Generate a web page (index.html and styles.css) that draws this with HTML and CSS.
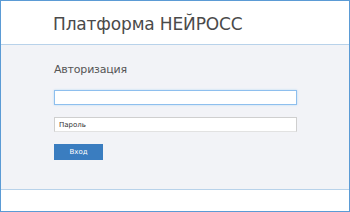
FILE: index.html
```html
<!DOCTYPE html>
<html lang="ru">
<head>
    <meta charset="UTF-8">
    <title>Платформа НЕЙРОСС</title>
    <link rel="stylesheet" href="styles.css">
</head>
<body>

<div class="frame">
    <div class="header">
        <div class="title">Платформа НЕЙРОСС</div>
    </div>

    <div class="main">
        <div class="login-title">Авторизация</div>
        <input class="field field-focus" type="text">
        <input class="field" type="password" placeholder="Пароль">
        <button class="btn">Вход</button>
    </div>

    <div class="footer"></div>
</div>

</body>
</html>
```

FILE: styles.css
```css
body {
    margin: 0;
    padding: 0;
    background-color: white;
    font-family: "DejaVu Sans", Verdana, sans-serif;
}

.frame {
    width: 350px;
    height: 212px;
    box-sizing: border-box;
    border: 1px solid #5b9bd5;
    display: flex;
    flex-direction: column;
}

.header {
    height: 44px;
    border-bottom: 1px solid #b8d2ea;
    background-color: white;
    padding-left: 52px;
    box-sizing: border-box;
    display: flex;
    align-items: center;
}

.title {
    font-size: 17px;
    letter-spacing: -0.15px;
    color: #4a4a4a;
    padding-top: 2px;
}

.main {
    height: 145px;
    background-color: #f2f3f7;
    border-bottom: 1px solid #b8d2ea;
    padding: 18px 0 0 53px;
    box-sizing: border-box;
    display: flex;
    flex-direction: column;
    align-items: flex-start;
}

.login-title {
    font-size: 11px;
    letter-spacing: -0.2px;
    color: #555;
    margin-bottom: 14px;
}

.field {
    width: 243px;
    height: 15px;
    box-sizing: border-box;
    margin: 0 0 12px 0;
    padding: 0 4px;
    border: 1px solid #cfcfcf;
    border-bottom-color: #e2e2e2;
    background-color: white;
    font-family: "DejaVu Sans", Verdana, sans-serif;
    font-size: 7px;
    outline: none;
}

.field::placeholder {
    color: #333;
}

.field-focus {
    border: 1px solid #8ebfee;
    box-shadow: 0 0 2px #b8d8f5;
}

.btn {
    width: 49px;
    height: 16px;
    margin: 0;
    padding: 0;
    border: none;
    background-color: #3a7dc0;
    color: white;
    font-family: "DejaVu Sans", Verdana, sans-serif;
    font-size: 7px;
}

.footer {
    flex: 1;
    background-color: white;
}
```
